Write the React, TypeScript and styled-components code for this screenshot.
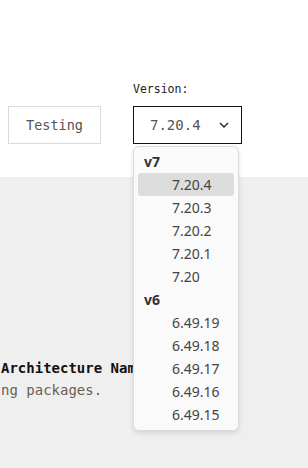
import React from "react";
import styled, { createGlobalStyle } from "styled-components";

const Global = createGlobalStyle`
  html, body { margin: 0; padding: 0; background: #fff; }
  body { width: 308px; height: 468px; overflow: hidden; font-family: "DejaVu Sans Mono", monospace; }
`;

const Page = styled.div`
  display: flex;
  flex-direction: column;
  height: 468px;
  position: relative;
`;

const Header = styled.div`
  height: 177px;
  box-sizing: border-box;
  display: flex;
  align-items: flex-end;
  gap: 32px;
  padding: 0 0 33px 8px;
  background: #fff;
`;

const Button = styled.div`
  box-sizing: border-box;
  width: 93px;
  height: 38px;
  border: 1px solid #dadada;
  display: flex;
  align-items: center;
  justify-content: center;
  font-family: "DejaVu Sans Mono", monospace;
  font-size: 13.5px;
  color: #555;
`;

const Field = styled.div`
  display: flex;
  flex-direction: column;
  gap: 9px;
  position: relative;
`;

const Label = styled.div`
  font-family: "DejaVu Sans Mono", monospace;
  font-size: 11.5px;
  color: #222;
  line-height: 15px;
`;

const Select = styled.div`
  box-sizing: border-box;
  width: 109px;
  height: 38px;
  border: 1px solid #111;
  display: flex;
  align-items: center;
  padding: 0 12px 0 16px;
  justify-content: space-between;
  font-family: "DejaVu Sans Mono", monospace;
  font-size: 14px;
  color: #555;
`;

const Main = styled.div`
  flex: 1;
  background: #efefef;
  padding: 180px 0 0 1px;
  overflow: hidden;
  white-space: nowrap;
`;

const Title = styled.div`
  font-family: "DejaVu Sans Mono", monospace;
  font-weight: bold;
  font-size: 14px;
  color: #111;
  line-height: 22px;
`;

const Desc = styled.div`
  font-family: "DejaVu Sans Mono", monospace;
  font-size: 14px;
  color: #6b5f52;
  line-height: 22px;
`;

const Menu = styled.div`
  position: absolute;
  top: 146px;
  left: 133px;
  width: 106px;
  box-sizing: border-box;
  padding: 3px 4px 4px;
  background: #fafafa;
  border: 1px solid #dcdcdc;
  border-radius: 6px;
  box-shadow: 0 2px 5px rgba(0, 0, 0, 0.12);
  font-family: "Noto Sans", "Open Sans", sans-serif;
  font-size: 14px;
  z-index: 5;
`;

const Group = styled.div`
  height: 23px;
  line-height: 23px;
  padding-left: 6px;
  font-weight: bold;
  color: #333;
`;

const Item = styled.div<{ $active?: boolean }>`
  height: 23px;
  line-height: 23px;
  padding-left: 34px;
  border-radius: 3px;
  color: #444;
  background: ${(p) => (p.$active ? "#dddddd" : "transparent")};
`;

const groups = [
  { name: "v7", items: ["7.20.4", "7.20.3", "7.20.2", "7.20.1", "7.20"] },
  { name: "v6", items: ["6.49.19", "6.49.18", "6.49.17", "6.49.16", "6.49.15"] },
];

export default function App() {
  return (
    <Page>
      <Global />
      <Header>
        <Button>Testing</Button>
        <Field>
          <Label>Version:</Label>
          <Select>
            <span>7.20.4</span>
            <svg width="10" height="6" viewBox="0 0 10 6" fill="none">
              <path d="M1 1l4 4 4-4" stroke="#222" strokeWidth="1.4" />
            </svg>
          </Select>
        </Field>
      </Header>
      <Main>
        <Title>Architecture Name</Title>
        <Desc>ng packages.</Desc>
      </Main>
      <Menu>
        {groups.map((g) => (
          <React.Fragment key={g.name}>
            <Group>{g.name}</Group>
            {g.items.map((v) => (
              <Item key={v} $active={v === "7.20.4"}>
                {v}
              </Item>
            ))}
          </React.Fragment>
        ))}
      </Menu>
    </Page>
  );
}
